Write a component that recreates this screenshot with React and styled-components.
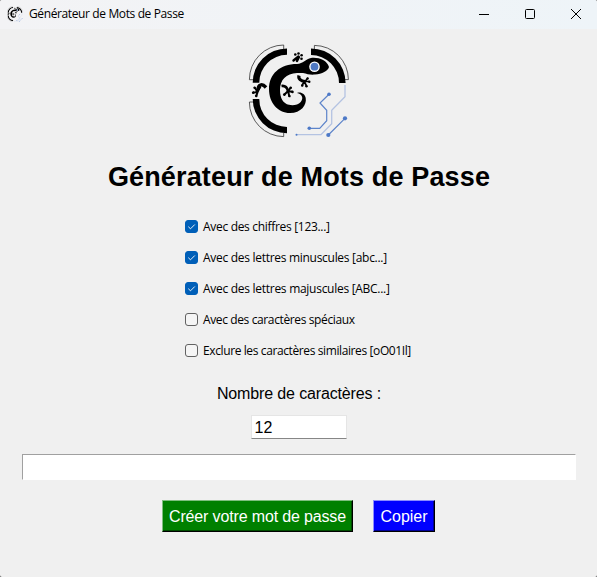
import React, { useState } from "react";
import styled, { createGlobalStyle } from "styled-components";

const GlobalStyle = createGlobalStyle`
  * { box-sizing: border-box; }
  body { margin: 0; background: #555; }
`;

const Window = styled.div`
  width: 597px;
  height: 577px;
  display: flex;
  flex-direction: column;
  overflow: hidden;
  background: #f0f0f0;
  border-radius: 2px;
  color: #000;
  font-family: "Liberation Sans", Arial, sans-serif;
`;

const TitleBar = styled.header`
  height: 29px;
  flex: none;
  display: flex;
  align-items: center;
  padding: 0 15px 2px 7px;
  background: linear-gradient(90deg, #f3f3f5, #eef4f8);
`;

const WindowTitle = styled.span`
  margin-left: 6px;
  font: 12px/16px "Open Sans", "Noto Sans", sans-serif;
  letter-spacing: ${(p) => p.$spacing}px;
  white-space: nowrap;
`;

const WindowControls = styled.div`
  display: flex;
  gap: 34px;
  margin-left: auto;
  svg { display: block; }
`;

const Content = styled.main`
  flex: 1;
  display: flex;
  flex-direction: column;
  align-items: center;
  padding-top: 13px;
`;

const LogoFrame = styled.div`
  padding-left: 2px;
`;

const Heading = styled.h1`
  margin: 20px 0 0;
  padding-left: 1px;
  height: 36px;
  font-size: 27px;
  line-height: 36px;
  letter-spacing: ${(p) => p.$spacing}px;
  font-weight: 700;
  white-space: nowrap;
`;

const OptionList = styled.div`
  width: 228px;
  margin-top: 16px;
`;

const Option = styled.label`
  height: 31px;
  display: flex;
  align-items: center;
  gap: 5.5px;
`;

const HiddenInput = styled.input`
  display: none;
`;

const CheckBox = styled.span`
  width: 13px;
  height: 13px;
  flex: none;
  display: flex;
  border-radius: 3px;
  border: 1px solid ${(p) => (p.$checked ? "#005fb8" : "#626262")};
  background: ${(p) => (p.$checked ? "#005fb8" : "#f5f5f5")};
`;

const OptionText = styled.span`
  font: 12px/16px "Open Sans", "Noto Sans", sans-serif;
  letter-spacing: ${(p) => p.$spacing}px;
  white-space: nowrap;
`;

const LengthLabel = styled.label`
  height: 20px;
  margin-top: 18px;
  padding-left: 1px;
  font-size: 16px;
  line-height: 20px;
  letter-spacing: -0.14px;
`;

const LengthInput = styled.input`
  width: 96px;
  height: 24px;
  margin-top: 11px;
  padding: 1px 2px 0 3px;
  border: 1px solid #e5e5e5;
  border-bottom-color: #868686;
  background: #fff;
  font: 16px "Liberation Sans", Arial, sans-serif;
  outline: none;
`;

const ResultInput = styled.input`
  width: 554px;
  height: 26px;
  margin-top: 15px;
  border: 1px solid;
  border-color: #a0a0a0 #fff #fff #a0a0a0;
  background: #fff;
  font: 16px "Liberation Sans", Arial, sans-serif;
  outline: none;
`;

const Actions = styled.div`
  display: flex;
  gap: 20px;
  margin-top: 20px;
`;

const ActionButton = styled.button`
  width: ${(p) => p.$width}px;
  height: 32px;
  padding: 2px 0 0;
  border: 1px solid;
  border-color: ${(p) => p.$light} #000 #000 ${(p) => p.$light};
  box-shadow: inset -1px -1px ${(p) => p.$dark};
  background: ${(p) => p.$color};
  color: #fff;
  font: 16px "Liberation Sans", Arial, sans-serif;
  letter-spacing: ${(p) => p.$spacing}px;
  white-space: nowrap;
`;

const LogoSvg = styled.svg`
  display: block;
  flex: none;
`;

const Foot = ({ x, y, turn = 0 }) => (
  <g transform={`translate(${x} ${y}) rotate(${turn})`}>
    <path d="M0 -.5 L4 0 M0 -.5 L2 -3.5 M0 -.5 L1.5 4 M0 -.5 L-3 3" fill="none" stroke="#000" strokeWidth="2" strokeLinecap="round" />
    <circle cx="4.5" cy="0" r="1.3" />
    <circle cx="2.4" cy="-4" r="1.3" />
    <circle cx="1.8" cy="4.4" r="1.3" />
    <circle cx="-3.4" cy="3.4" r="1.3" />
  </g>
);

const GeckoLogo = ({ width, height }) => (
  <LogoSvg width={width} height={height} viewBox="248 42 103 97" preserveAspectRatio="none">
    <g fill="none" stroke="#333" strokeWidth=".8">
      <path d="M253 79.7H249.4A34.5 34.5 0 0 1 283.7 45V49" />
      <path d="M314.4 49V45.4A34.2 34.2 0 0 1 348.4 79.6H345" />
      <path d="M253 102H249.4A34.5 34.5 0 0 0 283.7 136.6V133" />
    </g>
    <path d="M252.7 82.7A34.3 34.3 0 0 1 287 48.4V54.8A27.8 27.8 0 0 0 259.3 82.7Z" />
    <path d="M311 48.5A34.5 34.5 0 0 1 345.6 83H339A28 28 0 0 0 311 55Z" />
    <path d="M252.7 99A34.3 34.3 0 0 0 287 133.2V127A27.8 27.8 0 0 1 259.3 99Z" />
    <path d="M329 67C327 60 318 57 311 58C306 59 303 63.8 297 64C280 64 269 74 269 89C269 103 278 113 290 113C301 113 307 105 305.7 98C305 94 301 91.5 297 93C302 94 304 98 300.7 102C298 105 293 105.8 289 104.8C283 103.6 280 98 280 90C280 80 286 73.5 297 73L303 73C307 74 310 75 315 74.6C322 74 328 71 329 67Z" />
    <g>
      <path d="M293.5 60.5L298.5 56.5M297 61L299 57" fill="none" stroke="#000" strokeWidth="2.4" strokeLinecap="round" />
      <circle cx="295.3" cy="54.5" r="1.3" />
      <circle cx="298.5" cy="53.5" r="1.3" />
      <circle cx="301.6" cy="55.2" r="1.3" />
      <circle cx="301.5" cy="58.8" r="1.3" />
    </g>
    <path d="M299 75.5C298 79 301 81 305 81.5" fill="none" stroke="#000" strokeWidth="3.2" />
    <g>
      <path d="M304 81.5L309 81.5M304.5 82L307.5 78.5M304.5 82L306.5 86M304 82L302 85.5" fill="none" stroke="#000" strokeWidth="1.7" strokeLinecap="round" />
      <circle cx="309.3" cy="81.8" r="1.2" />
      <circle cx="307.6" cy="78.4" r="1.2" />
      <circle cx="306.5" cy="86.3" r="1.2" />
      <circle cx="302.3" cy="85.5" r="1.2" />
    </g>
    <Foot x={257.5} y={91.5} turn={165} />
    <path d="M258 90C258 84.5 262 83 266 87.5" fill="none" stroke="#000" strokeWidth="3.4" />
    <Foot x={288} y={91.5} turn={5} />
    <path d="M281.5 86C285 85.5 287 87 288 91" fill="none" stroke="#000" strokeWidth="2.6" />
    <circle cx="314.5" cy="66.7" r="5.3" fill="#fff" />
    <circle cx="314.5" cy="66.7" r="3.9" fill="#4f79c3" />
    <path d="M345 85V96.7L331.7 110.3V123.7L321 134.7H296.5" fill="none" stroke="#b4c3e2" strokeWidth="1.3" />
    <path d="M329 94.3L320 103L326.7 110.3V120.7L319.7 128.3H309.3M345 118.3L328.3 135" fill="none" stroke="#5d84ca" strokeWidth="1.2" />
    <g fill="#4d79c7">
      <circle cx="329" cy="94.3" r="1.8" />
      <circle cx="309.3" cy="128.3" r="1.8" />
      <circle cx="345" cy="118.3" r="2.1" />
      <circle cx="328.3" cy="135" r="2.1" />
      <circle cx="296.5" cy="134.7" r="1" />
    </g>
  </LogoSvg>
);

const initialOptions = [
  { label: "Avec des chiffres [123...]", checked: true, spacing: -0.31 },
  { label: "Avec des lettres minuscules [abc...]", checked: true, spacing: -0.29 },
  { label: "Avec des lettres majuscules [ABC...]", checked: true, spacing: -0.28 },
  { label: "Avec des caractères spéciaux", checked: false, spacing: -0.38 },
  { label: "Exclure les caractères similaires [oO01Il]", checked: false, spacing: -0.39 },
];

export default function App() {
  const [options, setOptions] = useState(initialOptions);
  const toggle = (index) =>
    setOptions(options.map((o, i) => (i === index ? { ...o, checked: !o.checked } : o)));

  return (
    <>
      <GlobalStyle />
      <Window>
        <TitleBar>
          <GeckoLogo width={16} height={16} />
          <WindowTitle $spacing={-0.38}>Générateur de Mots de Passe</WindowTitle>
          <WindowControls>
            <svg width="12" height="12" viewBox="0 0 12 12"><path d="M1 6.5H11" stroke="#000" /></svg>
            <svg width="12" height="12" viewBox="0 0 12 12"><rect x="1.5" y="1.5" width="9" height="9" rx="1" fill="none" stroke="#000" /></svg>
            <svg width="12" height="12" viewBox="0 0 12 12"><path d="M1 1L11 11M11 1L1 11" stroke="#000" /></svg>
          </WindowControls>
        </TitleBar>
        <Content>
          <LogoFrame>
            <GeckoLogo width={103} height={97} />
          </LogoFrame>
          <Heading $spacing={0.15}>Générateur de Mots de Passe</Heading>
          <OptionList>
            {options.map((o, i) => (
              <Option key={o.label}>
                <HiddenInput type="checkbox" checked={o.checked} onChange={() => toggle(i)} />
                <CheckBox $checked={o.checked}>
                  {o.checked && (
                    <svg width="11" height="11" viewBox="0 0 11 11"><path d="M2.3 5.7L4.5 7.8L8.8 3.5" fill="none" stroke="#fff" strokeWidth=".9" /></svg>
                  )}
                </CheckBox>
                <OptionText $spacing={o.spacing}>{o.label}</OptionText>
              </Option>
            ))}
          </OptionList>
          <LengthLabel htmlFor="length">Nombre de caractères :</LengthLabel>
          <LengthInput id="length" defaultValue="12" />
          <ResultInput aria-label="Mot de passe" />
          <Actions>
            <ActionButton $width={191} $spacing={-0.15} $color="#008000" $light="#7fbf7f" $dark="#004b00">Créer votre mot de passe</ActionButton>
            <ActionButton $width={62} $spacing={0} $color="#0000ff" $light="#8c8cff" $dark="#000096">Copier</ActionButton>
          </Actions>
        </Content>
      </Window>
    </>
  );
}
